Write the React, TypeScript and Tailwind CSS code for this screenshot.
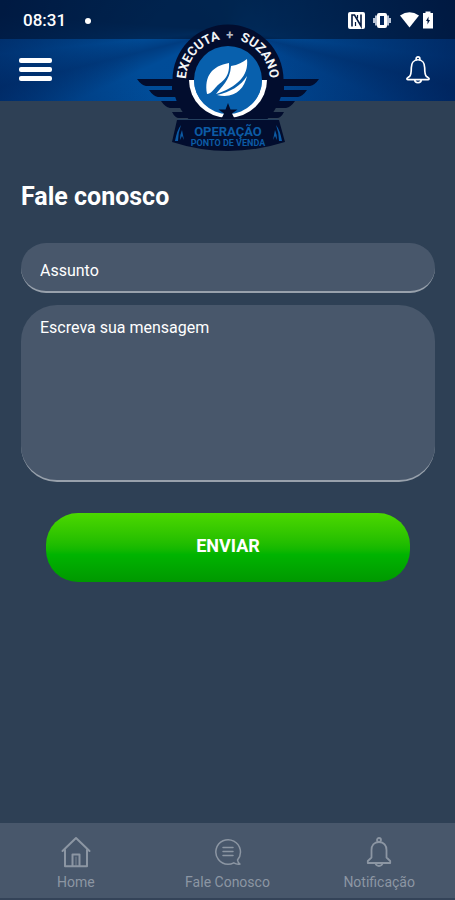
import type { ReactNode } from "react";

function MenuIcon() {
  return (
    <svg width="34" height="26" viewBox="0 0 34 26" fill="#fff" aria-hidden="true">
      <rect x="1" y="1" width="33" height="5" rx="2" />
      <rect x="1" y="10" width="33" height="5" rx="2" />
      <rect x="1" y="19" width="33" height="5" rx="2" />
    </svg>
  );
}

function BellIcon({ className }: { className: string }) {
  return (
    <svg className={className} viewBox="0 0 28 30" fill="none" stroke="currentColor" strokeWidth="1.8" strokeLinejoin="round" strokeLinecap="round" aria-hidden="true">
      <path d="M12 4V2.800a2 2 0 0 1 4 0V4" />
      <path d="M14 4C9 4 6.800 8 6.800 12.500c0 6-.3 8-2 9.500-1.300 1-2.800 1.500-2.800 2.500 0 .6.400.9 1 .9h22c.6 0 1-.3 1-.9 0-1-1.500-1.500-2.800-2.500-1.700-1.500-2-3.500-2-9.500C21.200 8 19 4 14 4Z" />
      <path d="M10.500 25.500a3.500 3.200 0 0 0 7 0" />
    </svg>
  );
}

function TabBellIcon() {
  return (
    <svg width="26" height="30" viewBox="0 0 26 30" fill="none" stroke="currentColor" strokeWidth="1.800" strokeLinejoin="round" aria-hidden="true">
      <circle cx="13" cy="3" r="2" />
      <path d="M13 5C8 5 5.500 8.500 5.500 13v7.500L1.800 24v2h22.400v-2l-3.700-3.500V13C20.500 8.500 18 5 13 5Z" />
      <path d="M9.500 26a3.500 3 0 0 0 7 0" />
    </svg>
  );
}

function HomeIcon() {
  return (
    <svg width="30" height="32" viewBox="0 0 30 32" fill="none" stroke="currentColor" strokeWidth="2" strokeLinejoin="round" strokeLinecap="round" aria-hidden="true">
      <path d="M1.500 15 15 2l13.500 13" />
      <path d="M4 14v16.200h22V14" />
      <path d="M11.500 30V18.500h7V30" />
      <path d="M15 21v9" strokeWidth="1.200" opacity=".6" />
    </svg>
  );
}

function ChatIcon() {
  return (
    <svg width="28" height="28" viewBox="0 0 28 28" fill="none" stroke="currentColor" strokeWidth="1.500" strokeLinejoin="round" strokeLinecap="round" aria-hidden="true">
      <path d="M23.500 22A12.300 12.300 0 1 0 14 26.300c2 0 4-.5 5.800-1.500 2 1.200 4 1.700 6.200 1.200-1.500-1-2.300-2.400-2.500-4Z" />
      <path d="M9 9.500h10M9 13.500h10M9 17.500h10" />
    </svg>
  );
}

function StatusIcons() {
  return (
    <svg width="87" height="20" viewBox="347 11 87 20" fill="#fff" aria-label="NFC, vibração, Wi-Fi, bateria">
      <rect x="348" y="12" width="17" height="17" rx="2" />
      <path d="M352 26.500V15h2.500l6.500 11V14.500" fill="none" stroke="#03193f" strokeWidth="1.600" />
      <path d="M357.500 15v3.500M355.500 22v4" stroke="#03193f" strokeWidth="1.200" />
      <path d="M375 15.500h14v10h-14ZM373 18h18v5h-18Z" fill="#b9c4d6" />
      <rect x="377" y="13" width="10" height="15" rx="2" />
      <rect x="380" y="16" width="4" height="9" fill="#03265a" />
      <path d="M400 15.500q9.500-6.500 19 0L409.500 27.500Z" />
      <path d="M423 13h2.500v-1.500h5V13h2.500v15.500h-10Z" />
      <path d="m428.500 16.500-2.500 4.500h1.500v3.500l2.500-4.500h-1.500Z" fill="#03193f" />
    </svg>
  );
}

function Wing() {
  return (
    <path d="M137 79h47v39h-6q-4 0-7-6h14v-4h-16q-5-1-9-7h16v-4h-19q-5-1-9-7h23v-4h-26q-5-1-9-7Z" />
  );
}

function Logo() {
  return (
    <svg width="182" height="128" viewBox="136 24 182 128" role="img" aria-label="Executa + Suzano, Operação Ponto de Venda">
      <defs>
        <path id="arc" d="M185 81a42 42 0 0 1 84 0" />
      </defs>
      <g fill="#020d2e">
        <circle cx="227" cy="80" r="55.500" />
        <path d="M182 80h90v38h-90Z" />
        <Wing />
        <g transform="translate(454 0) scale(-1 1)"><Wing /></g>
        <path d="M176 120h102l6 22q-57 18-113 0Z" />
      </g>
      <path d="M177 119.500h100" stroke="#24405f" />
      <path d="M188 80a39 38 0 0 0 78 0Z" fill="#fff" />
      <path d="M193 80a34 33 0 0 0 68 0Z" fill="#0860ad" />
      <circle cx="227" cy="80" r="34" fill="#0860ad" />
      <path d="M206 94c-3-18 5-28 22-31 1 15-7 18-12 23-4 4-6 8-10 8Z" fill="#fff" />
      <path d="M215 94c5-7 14-13 15-28 7-1 12-4 16-7 2 17-10 28-31 35Z" fill="#fff" />
      <path d="M216 95c13-3 24-9 30-19-3 13-12 23-30 19Z" fill="#fff" />
      <path d="m227 103 2.500 6.500h7l-5.500 4 3 6h-14l3-6-5.500-4h7Z" fill="#020d2e" />
      <g className="font-[Roboto,sans-serif] font-bold" fill="#f4f5f7" fontSize="13">
        <text><textPath href="#arc" startOffset="2">EXECUTA</textPath></text>
        <text fill="#b5bac6"><textPath href="#arc" startOffset="64">+</textPath></text>
        <text><textPath href="#arc" startOffset="78">SUZANO</textPath></text>
      </g>
      <g className="font-[Roboto,sans-serif] font-bold" fill="#0c5ba5" textAnchor="middle">
        <text x="227" y="136" fontSize="13">OPERAÇÃO</text>
        <text x="227" y="146" fontSize="9">PONTO DE VENDA</text>
      </g>
      <path d="M174 141q2-11 6-16-3 8-3 16ZM179 140q0-6 2-10l2 10-2-4ZM281 141q-2-11-6-16 3 8 3 16ZM276 140q0-6-2-10l-2 10 2-4Z" fill="#0c5ba5" />
    </svg>
  );
}

function Tab({ icon, label }: { icon: ReactNode; label: string }) {
  return (
    <a href="#" className="flex flex-1 flex-col items-center">
      <span className="flex h-8 items-center">{icon}</span>
      <span className="mt-1 text-sm leading-5">{label}</span>
    </a>
  );
}

export default function App() {
  return (
    <div className="flex min-h-screen flex-col bg-[#2e4055] font-[Roboto,sans-serif] text-white">
      <header className="relative bg-[radial-gradient(circle_at_45%_60%,transparent_25%,#00154899_100%),conic-gradient(from_0deg_at_50%_30%,#00407f_0deg,#00468c_85deg,#004a94_97deg,#003c80_104deg,#00458f_114deg,#004a96_180deg,#004c98_245deg,#003c80_256deg,#004a94_264deg,#003c7c_274deg,#00407f_360deg)]">
        <div className="flex h-[39px] items-center bg-[#000a20]/50 pt-0.5 pr-[21px] pl-[23px]">
          <span className="text-[17px] font-medium">08:31</span>
          <span className="ml-[19px] size-1.5 rounded-full bg-white" />
          <span className="ml-auto"><StatusIcons /></span>
        </div>
        <div className="flex h-[62px] items-center justify-between pr-6 pl-[18px]">
          <button type="button" aria-label="Menu"><MenuIcon /></button>
          <button type="button" aria-label="Notificações"><BellIcon className="h-[30px] w-[26px]" /></button>
        </div>
        <div className="absolute top-6 left-1/2 -translate-x-1/2"><Logo /></div>
      </header>

      <main className="flex-1 pt-20 pr-5 pl-[21px]">
        <h1 className="text-[25px] leading-8 font-bold">Fale conosco</h1>
        <form className="mt-[30px] flex flex-col" onSubmit={(e) => e.preventDefault()}>
          <input
            aria-label="Assunto"
            placeholder="Assunto"
            className="h-[50px] rounded-[25px] border-b-2 border-[#98a1ac] bg-[#48576b] px-[19px] pt-1.5 text-base outline-none placeholder:text-white"
          />
          <textarea
            aria-label="Escreva sua mensagem"
            placeholder="Escreva sua mensagem"
            className="mt-3 h-[177px] resize-none rounded-[36px] border-b-2 border-[#98a1ac] bg-[#48576b] px-[19px] pt-[11px] text-base outline-none placeholder:text-white"
          />
          <button
            type="submit"
            className="mx-[25px] mt-[31px] h-[69px] rounded-[32px] bg-linear-to-b from-[#4bd800] via-[#00b400] via-60% to-[#009800] pb-1 text-lg font-bold"
          >
            ENVIAR
          </button>
        </form>
      </main>

      <nav className="flex h-[77px] border-b-2 border-[#344358] bg-[#48576b] pt-[13px] text-[#8c96a3]">
        <Tab icon={<HomeIcon />} label="Home" />
        <Tab icon={<ChatIcon />} label="Fale Conosco" />
        <Tab icon={<TabBellIcon />} label="Notificação" />
      </nav>
    </div>
  );
}
